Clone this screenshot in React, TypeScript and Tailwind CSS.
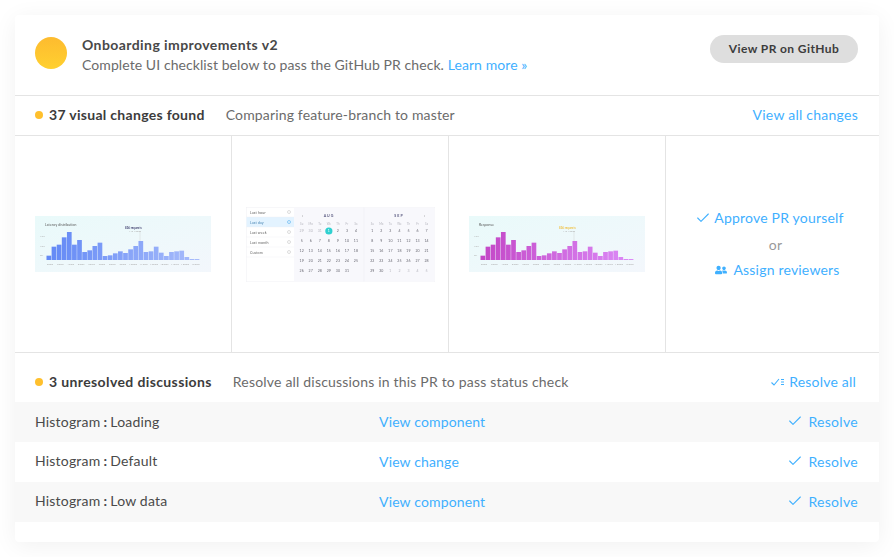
import { Check } from "lucide-react";
import { FaUserFriends } from "react-icons/fa";

const heights = [152, 125, 119, 97, 81, 119, 105, 141, 136, 123, 113, 153, 151, 145, 139, 144, 133, 123, 108, 141, 139, 125, 143, 153, 141, 139, 137, 156, 162, 162];
const ticks = ["20ms", "30ms", "40ms", "50ms", "60ms", "70ms", "80ms", "90ms", "100ms", "110ms", "120ms", "130ms", "140ms", "150ms", "160ms"];

const Histogram = ({ id, title, from, to, note, noteColor }: { id: string; title: string; from: string; to: string; note: string; noteColor: string }) => (
  <svg width="176" height="56" viewBox="0 0 176 56" className="block blur-[0.5px]" style={{ fontFamily: "Lato, sans-serif" }}>
    <defs>
      <linearGradient id={`${id}-bg`} x1="0" y1="0" x2="1" y2="1">
        <stop offset="0" stopColor="#e9fafa" />
        <stop offset="1" stopColor="#f3f7fc" />
      </linearGradient>
      <linearGradient id={`${id}-bar`} gradientUnits="userSpaceOnUse" x1="10" y1="10" x2="165" y2="44">
        <stop offset="0" stopColor={from} />
        <stop offset="1" stopColor={to} />
      </linearGradient>
    </defs>
    <rect width="176" height="56" fill={`url(#${id}-bg)`} />
    <text x="10" y="10" fontSize="3.4" fill="#555">{title}</text>
    {["15K", "10K", "5K"].map((t, i) => (
      <text key={t} x="5" y={21 + i * 9.6} fontSize="2.6" fill="#aaa">{t}</text>
    ))}
    {heights.map((h, i) => (
      <rect key={i} x={11.5 + i * 5.11} y={h / 3 - 11} width="4.7" height={(165 - h) / 3} fill={`url(#${id}-bar)`} />
    ))}
    <line x1="105" y1="15" x2="105" y2="25" stroke="#ccc" strokeWidth="0.4" />
    <text x="90" y="13" fontSize="2.7" fontWeight="700" fill={noteColor}>{note}</text>
    <text x="94" y="16" fontSize="2.2" fill="#aaa">140-150ms</text>
    {ticks.map((t, i) => (
      <text key={t} x={15 + i * 10.4} y="48.5" fontSize="2.6" textAnchor="middle" fill="#aaa">{t}</text>
    ))}
  </svg>
);

const colX = (start: number, i: number) => start + i * 9.05;
const rowY = [24.5, 34.5, 44.5, 54.5, 64.5];
const week = ["Su", "Mo", "Tu", "We", "Th", "Fr", "Sa"];
const aug = [29, 30, 31, 1, 2, 3, 4, 5, 6, 7, 8, 9, 10, 11, 12, 13, 14, 15, 16, 17, 18, 19, 20, 21, 22, 23, 24, 25, 26, 27, 28, 29, 30, 31];
const sep = [1, 2, 3, 4, 5, 6, 7, 8, 9, 10, 11, 12, 13, 14, 15, 16, 17, 18, 19, 20, 21, 22, 23, 24, 25, 26, 27, 28, 29, 30, 1, 2, 3, 4, 5];
const ranges = ["Last hour", "Last day", "Last week", "Last month", "Custom"];

const CalendarThumb = () => (
  <svg width="189" height="75" viewBox="0 0 189 75" className="block blur-[0.4px]" style={{ fontFamily: "Lato, sans-serif" }}>
    <rect x="0.25" y="0.25" width="188.5" height="74.5" fill="#fff" stroke="#f0f0f4" strokeWidth="0.5" />
    <rect x="48" y="0.5" width="140.5" height="74" fill="#f8f8fc" />
    <line x1="118" y1="0.5" x2="118" y2="74.5" stroke="#efeff4" strokeWidth="0.6" />
    <rect x="0.5" y="10" width="47.5" height="10" fill="#e3f3ff" />
    {ranges.map((r, i) => (
      <g key={r}>
        <text x="4" y={6.5 + i * 10} fontSize="3.6" fill={i === 1 ? "#4b87b5" : "#666"}>{r}</text>
        <circle cx="43" cy={5 + i * 10} r="1.5" fill="none" stroke={i === 1 ? "#3aa0e8" : "#bbb"} strokeWidth="0.5" />
        <line x1="0.5" y1={10 + i * 10} x2="48" y2={10 + i * 10} stroke="#f0f0f4" strokeWidth="0.4" />
      </g>
    ))}
    <text x="55.7" y="9.5" fontSize="4.5" fill="#777">‹</text>
    <text x="177.7" y="9.5" fontSize="4.5" fill="#777">›</text>
    <text x="83" y="9.6" fontSize="3.6" fontWeight="700" letterSpacing="1" textAnchor="middle" fill="#5a5a80">AUG</text>
    <text x="153" y="9.6" fontSize="3.6" fontWeight="700" letterSpacing="1" textAnchor="middle" fill="#5a5a80">SEP</text>
    {week.map((d, i) => (
      <g key={d} fontSize="2.8" fill="#b5b5bd" textAnchor="middle">
        <text x={colX(55.7, i)} y="17.5">{d}</text>
        <text x={colX(126.3, i)} y="17.5">{d}</text>
      </g>
    ))}
    <circle cx={colX(55.7, 3)} cy="24" r="3.6" fill="#2fd0d0" />
    {aug.map((d, i) => (
      <text key={`a${i}`} x={colX(55.7, i % 7)} y={rowY[Math.floor(i / 7)] + 0.6} fontSize="3.5" textAnchor="middle" fill={i < 3 ? "#b5b5bd" : i === 3 ? "#fff" : "#666670"}>{d}</text>
    ))}
    {sep.map((d, i) => (
      <text key={`s${i}`} x={colX(126.3, i % 7)} y={rowY[Math.floor(i / 7)] + 0.6} fontSize="3.5" textAnchor="middle" fill={i > 29 ? "#b5b5bd" : "#666670"}>{d}</text>
    ))}
  </svg>
);

const ResolveAllIcon = () => (
  <svg width="13" height="10" viewBox="0 0 13 10" fill="none" stroke="#3fb0ff" strokeWidth="1.1">
    <path d="M0.5 5.5 L3 8 L8 2" />
    <path d="M10 2.5 H13 M10 5 H13 M10 7.5 H13" />
  </svg>
);

const rows = [
  { name: "Loading", link: "View component", label: "" },
  { name: "Default", link: "View change", label: "-translate-y-px" },
  { name: "Low data", link: "View component", label: "-translate-y-px" },
];

export default function App() {
  return (
    <div className="min-h-[557px] bg-white px-[15px] pt-[15px] font-['Lato',sans-serif] text-[14px] tracking-[0.1px] text-[#6b6b6b]">
      <div className="h-[527px] w-[864px] rounded-[4px] bg-white shadow-[0_4px_24px_rgba(0,0,0,0.06)]">
        {/* header */}
        <div className="flex h-[81px] items-start border-b border-[#e4e4e4] pt-5 pr-[21px] pl-5">
          <div className="mt-[2px] h-8 w-8 rounded-full bg-gradient-to-b from-[#fdbb2f] to-[#ffd030]" />
          <div className="ml-[15px] flex-1">
            <h1 className="text-[14px] leading-5 font-bold tracking-[0.42px] text-[#484848]">Onboarding improvements v2</h1>
            <p className="leading-5 tracking-[0.08px]">
              Complete UI checklist below to pass the GitHub PR check. <a className="text-[#3fb0ff]">Learn more »</a>
            </p>
          </div>
          <button className="h-7 w-[148px] rounded-full bg-[#dedede] text-[12px] font-bold tracking-[0.4px] text-[#3c3c3c]">View PR on GitHub</button>
        </div>

        {/* changes */}
        <div className="flex h-10 items-center border-b border-[#e4e4e4] pr-[21px] pb-[2px] pl-5">
          <span className="h-2 w-2 rounded-full bg-[#ffc02d]" />
          <span className="ml-1.5 font-bold tracking-[0.3px] text-[#3c3c3c]">37 visual changes found</span>
          <span className="ml-[21px] flex-1 tracking-[0.15px]">Comparing feature-branch to master</span>
          <a className="tracking-[0.25px] text-[#3fb0ff]">View all changes</a>
        </div>

        <div className="grid h-[217px] grid-cols-[217px_217px_217px_1fr] border-b border-[#e4e4e4]">
          <div className="flex items-center border-r border-[#e4e4e4] pl-5">
            <Histogram id="blue" title="Latency distribution" from="#5f86f5" to="#a9bdfb" note="836 requests" noteColor="#3a3a6a" />
          </div>
          <div className="flex items-center border-r border-[#e4e4e4] pl-[14px]">
            <CalendarThumb />
          </div>
          <div className="flex items-center border-r border-[#e4e4e4] pl-5">
            <Histogram id="pink" title="Response" from="#c244c4" to="#dc8cf8" note="836 requests" noteColor="#f0c040" />
          </div>
          <div className="flex flex-col items-center pt-[72px] tracking-[0.2px] text-[#3fb0ff]">
            <a className="mr-[6px] flex items-center gap-[3px] leading-5">
              <Check size={16} strokeWidth={1.6} />
              Approve PR yourself
            </a>
            <span className="mt-[7px] ml-[6px] leading-5 text-[#9a9a9a]">or</span>
            <a className="mt-[5px] ml-[10px] flex items-center gap-[6px] leading-5">
              <FaUserFriends size={12} />
              Assign reviewers
            </a>
          </div>
        </div>

        {/* discussions */}
        <div className="flex h-[49px] items-center pt-[8px] pr-[23px] pl-5">
          <span className="h-2 w-2 rounded-full bg-[#ffc02d]" />
          <span className="ml-1.5 font-bold tracking-[0.38px] text-[#3c3c3c]">3 unresolved discussions</span>
          <span className="ml-[21px] flex-1 tracking-[0.19px]">Resolve all discussions in this PR to pass status check</span>
          <a className="flex items-center gap-[5px] tracking-[0.2px] text-[#3fb0ff]">
            <ResolveAllIcon />
            Resolve all
          </a>
        </div>
        {rows.map((r) => (
          <div key={r.name} className="grid h-10 grid-cols-[344px_1fr_auto] items-center pr-[21px] pb-[2px] pl-5 odd:bg-[#f8f8f8]">
            <span className={`tracking-[0.2px] text-[#4a4a4a] ${r.label}`}>
              Histogram<span className="mx-[3px] font-bold">:</span>{r.name}
            </span>
            <a className="tracking-[0.15px] text-[#3fb0ff]">{r.link}</a>
            <a className="flex items-center gap-[5px] tracking-[0.3px] text-[#3fb0ff]">
              <Check size={16} strokeWidth={1.6} />
              Resolve
            </a>
          </div>
        ))}
      </div>
    </div>
  );
}
